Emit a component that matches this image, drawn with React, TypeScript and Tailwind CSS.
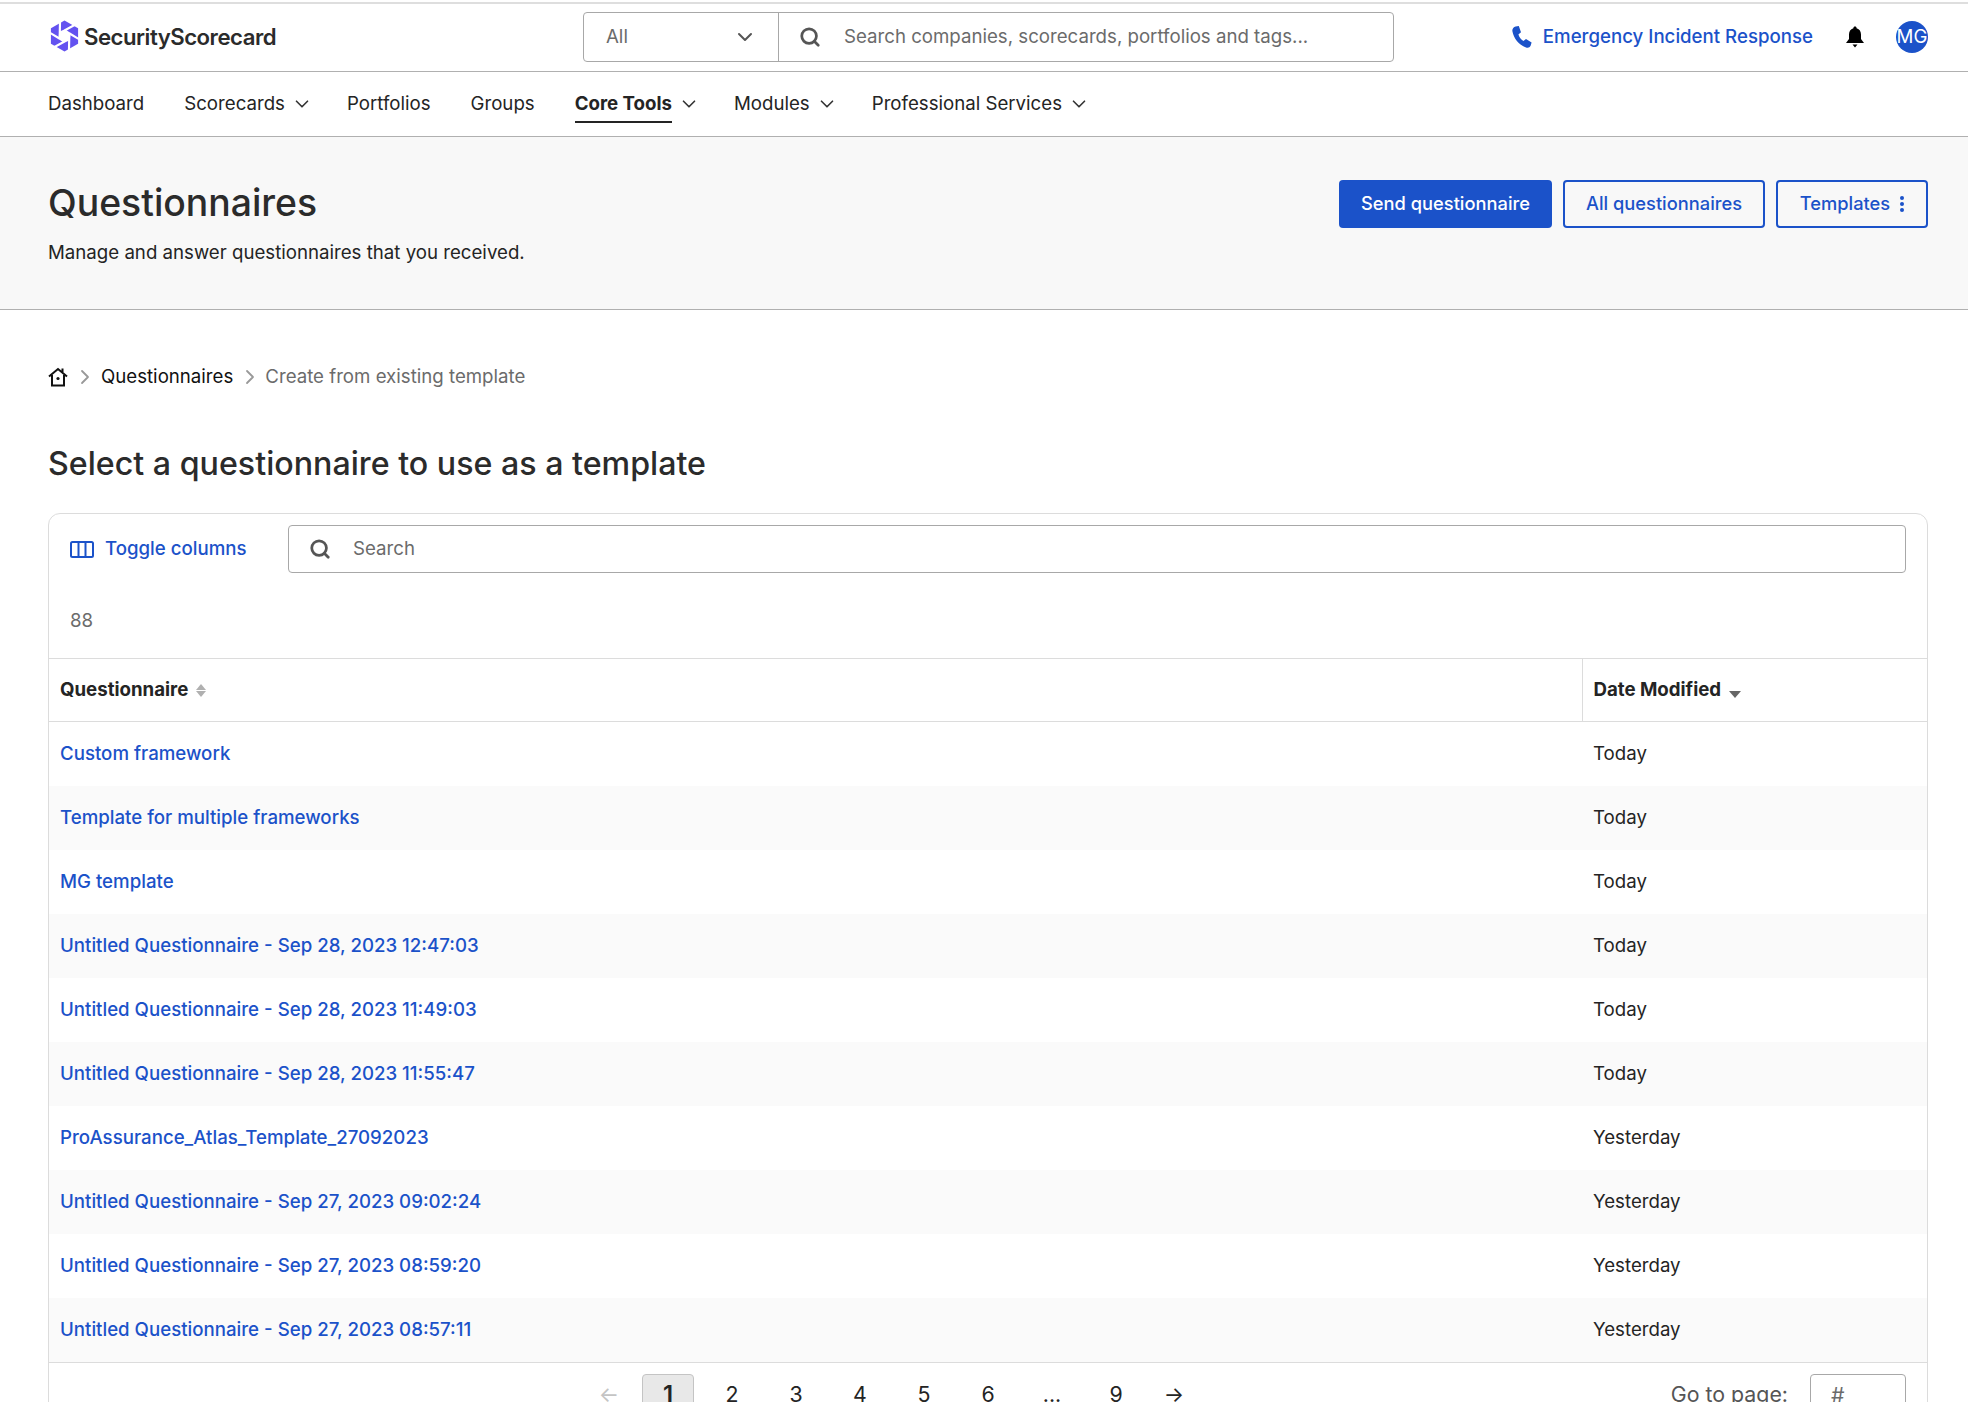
import { ChevronDown, ChevronRight, Search } from "lucide-react"

const rows = [
  ["Custom framework", "Today"],
  ["Template for multiple frameworks", "Today"],
  ["MG template", "Today"],
  ["Untitled Questionnaire - Sep 28, 2023 12:47:03", "Today"],
  ["Untitled Questionnaire - Sep 28, 2023 11:49:03", "Today"],
  ["Untitled Questionnaire - Sep 28, 2023 11:55:47", "Today"],
  ["ProAssurance_Atlas_Template_27092023", "Yesterday"],
  ["Untitled Questionnaire - Sep 27, 2023 09:02:24", "Yesterday"],
  ["Untitled Questionnaire - Sep 27, 2023 08:59:20", "Yesterday"],
  ["Untitled Questionnaire - Sep 27, 2023 08:57:11", "Yesterday"],
]

function Logo() {
  return (
    <svg width="29" height="32" viewBox="0 0 32 35" className="ml-[2px]">
      <path d="M16 0.5 L31 9 L31 26 L16 34.5 L1 26 L1 9 Z" fill="#6352f0" />
      {[0, 60, 120, 180, 240, 300].map((deg) => (
        <path
          key={deg}
          d="M16 11 L21.2 14.5 L32 21"
          stroke="#fff"
          strokeWidth="2.4"
          fill="none"
          transform={`rotate(${deg} 16 17.5)`}
        />
      ))}
      <path d="M16 11 L21.6 14.25 L21.6 20.75 L16 24 L10.4 20.75 L10.4 14.25 Z" fill="#fff" />
    </svg>
  )
}

function NavItem({ label, active, menu }: { label: string; active?: boolean; menu?: boolean }) {
  return (
    <div className="flex items-center gap-[6px]">
      <span
        className={
          active
            ? "relative font-bold text-[#242424] after:absolute after:left-0 after:right-0 after:top-[31px] after:h-[2px] after:bg-[#242424]"
            : "text-[#242424]"
        }
      >
        {label}
      </span>
      {menu && <ChevronDown size={22} strokeWidth={1.8} className="-mr-[6px] text-[#333]" />}
    </div>
  )
}

export default function App() {
  return (
    <div className="h-screen overflow-hidden bg-white font-['Inter',sans-serif] text-[18.67px] text-[#242424]">
      <header className="mt-[2px] flex h-[70px] items-center border-t-2 border-b border-t-[#dedede] border-b-[#b0b0b0] pb-[2px] pl-12 pr-10">
        <div className="flex w-[535px] items-center gap-[5px]">
          <Logo />
          <span className="text-[22.2px] font-semibold tracking-[-0.5px] text-[#2b2b2b]">SecurityScorecard</span>
        </div>
        <div className="flex h-[50px] w-[811px] rounded-[4px] border border-[#a8a8a8]">
          <div className="flex w-[195px] items-center justify-between border-r border-[#a8a8a8] pl-[22px] pr-[21px] text-[#6b6b6b]">
            All
            <ChevronDown size={24} strokeWidth={2} className="text-[#555]" />
          </div>
          <div className="flex flex-1 items-center gap-[23px] pl-[20px] text-[#6b6b6b]">
            <Search size={22} strokeWidth={3} className="text-[#555]" />
            Search companies, scorecards, portfolios and tags...
          </div>
        </div>
        <div className="ml-auto flex items-center">
          <svg width="20" height="22" viewBox="3 1 20 22" fill="#1b52c9">
            <path d="M6.6 1.5 L9.8 1 L12 7.2 L9.4 9.4 C10.3 12 12 14.4 14.4 16 L17 14 L22.6 17.4 L21.6 20.8 C20.8 22.6 18.8 23.2 17 22.4 C9.6 19.6 4.6 13.2 3.4 6.2 C3 4 4.4 2.2 6.6 1.5 Z" />
          </svg>
          <span className="ml-[11px] font-medium text-[#1b52c9]">Emergency Incident Response</span>
          <svg className="ml-[32px]" width="20" height="22" viewBox="0 0 20 22" fill="#000">
            <path d="M10 0.5 C11 0.5 11.6 1.2 11.6 2.2 C14.6 3 16 5.6 16 8.6 L16 13 L19 17 L1 17 L4 13 L4 8.6 C4 5.6 5.4 3 8.4 2.2 C8.4 1.2 9 0.5 10 0.5 Z" />
            <path d="M7.5 18.5 L12.5 18.5 L10 21.5 Z" />
          </svg>
          <div className="ml-[31px] flex h-[32px] w-[32px] items-center justify-center rounded-full bg-[#1b52c9] text-white">
            MG
          </div>
        </div>
      </header>

      <nav className="flex h-[65px] items-center gap-[40px] border-b border-[#b0b0b0] pl-12">
        <NavItem label="Dashboard" />
        <NavItem label="Scorecards" menu />
        <NavItem label="Portfolios" />
        <NavItem label="Groups" />
        <NavItem label="Core Tools" active menu />
        <NavItem label="Modules" menu />
        <NavItem label="Professional Services" menu />
      </nav>

      <section className="flex h-[173px] items-start justify-between border-b border-[#b0b0b0] bg-[#f8f8f8] pl-12 pr-10 pt-[43px]">
        <div>
          <h1 className="text-[37.33px] leading-[46px] font-medium text-[#2b2b2b]">Questionnaires</h1>
          <p className="mt-[14px] leading-[26px]">Manage and answer questionnaires that you received.</p>
        </div>
        <div className="flex gap-[11px] text-[18.3px]">
          <button className="h-[48px] w-[213px] rounded-[4px] bg-[#1b52c9] font-medium text-white">Send questionnaire</button>
          <button className="h-[48px] w-[202px] rounded-[4px] border-2 border-[#1b52c9] font-medium text-[#1b52c9]">All questionnaires</button>
          <button className="flex h-[48px] w-[152px] items-center justify-center gap-[10px] rounded-[4px] border-2 border-[#1b52c9] font-medium text-[#1b52c9]">
            Templates
            <span className="flex flex-col gap-[2px]">
              <span className="h-[4px] w-[4px] rounded-full bg-[#1b52c9]" />
              <span className="h-[4px] w-[4px] rounded-full bg-[#1b52c9]" />
              <span className="h-[4px] w-[4px] rounded-full bg-[#1b52c9]" />
            </span>
          </button>
        </div>
      </section>

      <main className="pl-12 pr-10">
        <div className="mt-[54px] flex items-center leading-[26px]">
          <svg width="20" height="20" viewBox="0 0 20 20" fill="none" stroke="#111" strokeWidth="2">
            <path d="M1 9.5 L10 2 L19 9.5 M4 8 L4 18.5 L16 18.5 L16 8 M14.5 1.5 L14.5 5" />
            <circle cx="10" cy="11.5" r="1.6" fill="#111" stroke="none" />
          </svg>
          <ChevronRight size={24} strokeWidth={1.8} className="ml-[5px] text-[#999]" />
          <span className="ml-[4px] text-[#111]">Questionnaires</span>
          <ChevronRight size={24} strokeWidth={1.8} className="ml-[5px] text-[#999]" />
          <span className="ml-[3px] text-[#6b6b6b]">Create from existing template</span>
        </div>

        <h2 className="mt-[53px] text-[32.2px] leading-[42px] font-medium text-[#2b2b2b]">Select a questionnaire to use as a template</h2>

        <div className="mt-[28px] rounded-t-[12px] border border-[#dcdcdc]">
          <div className="flex items-center pl-[21px] pr-[21px] pt-[11px]">
            <div className="flex w-[218px] items-center gap-[11px] font-medium text-[#1b52c9]">
              <svg width="24" height="17" viewBox="0 0 24 17" fill="none" stroke="#1b52c9" strokeWidth="2">
                <rect x="1" y="1" width="22" height="15" rx="1.5" />
                <path d="M8.5 1 L8.5 16 M15.5 1 L15.5 16" />
              </svg>
              Toggle columns
            </div>
            <div className="flex h-[48px] flex-1 items-center gap-[22px] rounded-[4px] border border-[#a8a8a8] pl-[20px] text-[#6b6b6b]">
              <Search size={22} strokeWidth={3} className="text-[#555]" />
              Search
            </div>
          </div>
          <div className="pl-[21px] pb-[24px] pt-[35px] leading-[26px] text-[#6b6b6b]">88</div>

          <table className="w-full table-fixed border-collapse">
            <thead>
              <tr className="h-[63px] border-y border-[#dcdcdc] text-left">
                <th className="border-r border-[#dcdcdc] pl-[11px] font-bold">
                  <div className="flex items-center gap-[8px]">
                    Questionnaire
                    <span className="flex flex-col gap-[1px]">
                      <span className="h-0 w-0 border-x-[5px] border-b-[6px] border-x-transparent border-b-[#b0b0b0]" />
                      <span className="h-0 w-0 border-x-[5px] border-t-[6px] border-x-transparent border-t-[#b0b0b0]" />
                    </span>
                  </div>
                </th>
                <th className="w-[345px] pl-[11px] font-bold">
                  <div className="flex items-center gap-[8px]">
                    Date Modified
                    <span className="mt-[8px] h-0 w-0 border-x-[6px] border-t-[7px] border-x-transparent border-t-[#666]" />
                  </div>
                </th>
              </tr>
            </thead>
            <tbody>
              {rows.map(([name, date], i) => (
                <tr key={i} className="h-[64px] even:bg-[#fafafa]">
                  <td className="pl-[11px] font-medium text-[#1b52c9]">{name}</td>
                  <td className="pl-[11px]">{date}</td>
                </tr>
              ))}
            </tbody>
          </table>

          <div className="flex border-t border-[#dcdcdc] pt-[11px] text-[21.33px] leading-[40px]">
            <div className="ml-[536px] flex items-start">
              <span className="w-[48px] text-center text-[#c4c4c4]">←</span>
              <span className="ml-[9px] h-[52px] w-[52px] rounded-[4px] border border-[#c4c4c4] bg-[#e8e8e8] text-center text-[24px] leading-[40px] font-semibold">1</span>
              <div className="ml-[6px] flex">
                {["2", "3", "4", "5", "6", "...", "9"].map((p) => (
                  <span key={p} className="w-[64px] text-center">{p}</span>
                ))}
              </div>
              <span className="ml-[2px] w-[48px] text-center">→</span>
            </div>
            <div className="ml-auto mr-[21px] flex items-start gap-[22px] text-[#555]">
              Go to page:
              <span className="h-[52px] w-[96px] rounded-[4px] border border-[#a8a8a8] pl-[20px] text-[#6b6b6b]">#</span>
            </div>
          </div>
        </div>
      </main>
    </div>
  )
}
